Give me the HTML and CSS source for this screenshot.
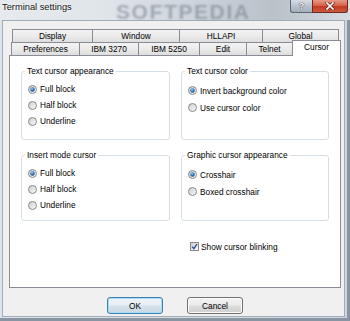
FILE: index.html
```html
<!DOCTYPE html>
<html>
<head>
<meta charset="utf-8">
<title>Terminal settings</title>
<link rel="stylesheet" href="styles.css">
</head>
<body>
<svg class="defs" aria-hidden="true">
  <defs>
    <linearGradient id="rbg" x1="0" y1="0" x2="1" y2="1">
      <stop offset="0" stop-color="#cbcbcb"/>
      <stop offset="1" stop-color="#fdfdfd"/>
    </linearGradient>
    <radialGradient id="dot" cx="0.4" cy="0.35" r="0.7">
      <stop offset="0" stop-color="#a6dbfb"/>
      <stop offset="0.5" stop-color="#2f7bc2"/>
      <stop offset="1" stop-color="#0e3e77"/>
    </radialGradient>
  </defs>
</svg>
<div class="window">
  <div class="titlebar">
    <span class="title">Terminal settings</span>
    <span class="watermark">SOFTPEDIA</span>
    <div class="caption">
      <div class="cbtn help">?</div>
      <div class="cbtn close">
        <svg width="10" height="8" viewBox="0 0 10 8"><path d="M2 1 L8 7 M8 1 L2 7" stroke="#5a2318" stroke-width="3" stroke-linecap="square"/><path d="M2 1 L8 7 M8 1 L2 7" stroke="#ffffff" stroke-width="1.7" stroke-linecap="square"/></svg>
      </div>
    </div>
  </div>
  <div class="client">
    <div class="tabrow row1">
      <div class="tab w-display">Display</div>
      <div class="tab w-window">Window</div>
      <div class="tab w-hllapi">HLLAPI</div>
      <div class="tab w-global last">Global</div>
    </div>
    <div class="tabrow row2">
      <div class="tab w-pref">Preferences</div>
      <div class="tab w-3270">IBM 3270</div>
      <div class="tab w-5250">IBM 5250</div>
      <div class="tab w-edit">Edit</div>
      <div class="tab w-telnet">Telnet</div>
      <div class="tab sel w-cursor">Cursor</div>
    </div>
    <div class="panel">
      <div class="groups">
        <div class="group g-top">
          <div class="gtitle">Text cursor appearance</div>
          <div class="opts left">
            <div class="opt"><svg class="radio" viewBox="0 0 9 9"><circle cx="4.5" cy="4.5" r="4" fill="url(#rbg)" stroke="#8a8a8a"/><circle cx="4.5" cy="4.5" r="2.2" fill="url(#dot)"/></svg><span>Full block</span></div>
            <div class="opt"><svg class="radio" viewBox="0 0 9 9"><circle cx="4.5" cy="4.5" r="4" fill="url(#rbg)" stroke="#8a8a8a"/></svg><span>Half block</span></div>
            <div class="opt"><svg class="radio" viewBox="0 0 9 9"><circle cx="4.5" cy="4.5" r="4" fill="url(#rbg)" stroke="#8a8a8a"/></svg><span>Underline</span></div>
          </div>
        </div>
        <div class="group g-top">
          <div class="gtitle">Text cursor color</div>
          <div class="opts right">
            <div class="opt"><svg class="radio" viewBox="0 0 9 9"><circle cx="4.5" cy="4.5" r="4" fill="url(#rbg)" stroke="#8a8a8a"/><circle cx="4.5" cy="4.5" r="2.2" fill="url(#dot)"/></svg><span>Invert background color</span></div>
            <div class="opt"><svg class="radio" viewBox="0 0 9 9"><circle cx="4.5" cy="4.5" r="4" fill="url(#rbg)" stroke="#8a8a8a"/></svg><span>Use cursor color</span></div>
          </div>
        </div>
        <div class="group g-bottom">
          <div class="gtitle">Insert mode cursor</div>
          <div class="opts left">
            <div class="opt"><svg class="radio" viewBox="0 0 9 9"><circle cx="4.5" cy="4.5" r="4" fill="url(#rbg)" stroke="#8a8a8a"/><circle cx="4.5" cy="4.5" r="2.2" fill="url(#dot)"/></svg><span>Full block</span></div>
            <div class="opt"><svg class="radio" viewBox="0 0 9 9"><circle cx="4.5" cy="4.5" r="4" fill="url(#rbg)" stroke="#8a8a8a"/></svg><span>Half block</span></div>
            <div class="opt"><svg class="radio" viewBox="0 0 9 9"><circle cx="4.5" cy="4.5" r="4" fill="url(#rbg)" stroke="#8a8a8a"/></svg><span>Underline</span></div>
          </div>
        </div>
        <div class="group g-bottom">
          <div class="gtitle">Graphic cursor appearance</div>
          <div class="opts right">
            <div class="opt"><svg class="radio" viewBox="0 0 9 9"><circle cx="4.5" cy="4.5" r="4" fill="url(#rbg)" stroke="#8a8a8a"/><circle cx="4.5" cy="4.5" r="2.2" fill="url(#dot)"/></svg><span>Crosshair</span></div>
            <div class="opt"><svg class="radio" viewBox="0 0 9 9"><circle cx="4.5" cy="4.5" r="4" fill="url(#rbg)" stroke="#8a8a8a"/></svg><span>Boxed crosshair</span></div>
          </div>
        </div>
        <div class="checkrow">
          <svg class="check" viewBox="0 0 9 9"><rect x="0.5" y="0.5" width="8" height="8" fill="url(#rbg)" stroke="#8a8a8a"/><path d="M2.2 4.6 L3.9 6.6 L7 2.2" fill="none" stroke="#2b4c9a" stroke-width="1.4"/></svg>
          <span>Show cursor blinking</span>
        </div>
      </div>
    </div>
    <div class="buttons">
      <div class="btn default">OK</div>
      <div class="btn">Cancel</div>
    </div>
  </div>
</div>
</body>
</html>
```

FILE: styles.css
```css
html, body {
  margin: 0;
  padding: 0;
}
body {
  width: 350px;
  height: 321px;
  overflow: hidden;
  font-family: "Liberation Sans", Arial, sans-serif;
  font-size: 8.3px;
  color: #000;
  background: #d8e0e8;
}
.defs {
  position: absolute;
  width: 0;
  height: 0;
}
.window {
  width: 350px;
  height: 321px;
  box-sizing: border-box;
  background: linear-gradient(90deg, #dce4ec 0%, #d5dde6 60%, #ccd6e0 100%);
  box-shadow: inset -3px -3px 0 #8995a2;
}
.titlebar {
  position: relative;
  height: 20px;
  display: flex;
  justify-content: space-between;
  align-items: flex-start;
  background: linear-gradient(90deg, #e6eaee 0%, #e0e5ea 30%, #cdd4db 55%, #b9c1c9 78%, #c5ccd3 88%, #d7dde3 100%);
}
.title {
  padding: 2px 0 0 2px;
  font-size: 9.3px;
  line-height: 11px;
  color: #111;
  text-shadow: 0 0 3px #fff, 0 0 2px #fff;
  position: relative;
  z-index: 2;
}
.watermark {
  position: absolute;
  left: 116px;
  top: 0;
  font-size: 21px;
  font-weight: bold;
  letter-spacing: 1.6px;
  line-height: 24px;
  color: rgba(105, 116, 130, 0.5);
  filter: blur(1px);
  z-index: 1;
}
.caption {
  display: flex;
  margin-right: 2px;
  position: relative;
  z-index: 2;
}
.cbtn {
  height: 13px;
  box-sizing: border-box;
  border: 1px solid #5d6874;
  border-top: none;
  display: flex;
  align-items: center;
  justify-content: center;
}
.help {
  width: 22px;
  border-right: none;
  border-bottom-left-radius: 3px;
  background: linear-gradient(180deg, #d7dde3 0%, #b9c2cb 50%, #a6b0bb 100%);
  color: #fff;
  font-weight: bold;
  font-size: 9px;
  text-shadow: 0 0 1px #2a3440, 0 0 1px #2a3440;
}
.close {
  width: 36px;
  border-bottom-right-radius: 3px;
  border-color: #6e2a1c;
  background: linear-gradient(180deg, #e79a88 0%, #d6644b 45%, #c53a22 55%, #cc5a40 100%);
}
.client {
  margin: 0 5px 0 2px;
  height: 297px;
  box-sizing: border-box;
  border: 1px solid #a3adb8;
  background: #f0f0f0;
  padding-top: 8px;
}
.tabrow {
  display: flex;
  align-items: flex-end;
  height: 13px;
}
.row1 {
  margin-left: 9px;
}
.row2 {
  margin-left: 8px;
}
.tab {
  height: 13px;
  box-sizing: border-box;
  border-top: 1px solid #898c95;
  border-left: 1px solid #898c95;
  background: linear-gradient(180deg, #f3f3f3 0%, #ebebeb 50%, #dedede 100%);
  text-align: center;
  line-height: 12px;
  white-space: nowrap;
}
.tab.last {
  border-right: 1px solid #898c95;
}
.tab.sel {
  height: 16px;
  margin-top: -3px;
  margin-bottom: -1px;
  border-right: 1px solid #898c95;
  background: #fff;
  position: relative;
  z-index: 1;
  line-height: 13px;
}
.w-display { width: 80px; }
.w-window { width: 87px; }
.w-hllapi { width: 83px; }
.w-global { width: 77px; }
.w-pref { width: 68px; }
.w-3270 { width: 59px; }
.w-5250 { width: 61px; }
.w-edit { width: 47px; }
.w-telnet { width: 46px; }
.w-cursor { width: 49px; }
.panel {
  margin-left: 6px;
  width: 332px;
  height: 233px;
  box-sizing: border-box;
  border: 1px solid #898c95;
  background: #fff;
  padding: 15px 0 0 11px;
}
.groups {
  display: grid;
  grid-template-columns: 149px 148px;
  grid-template-rows: 69px 66px 20px;
  column-gap: 11px;
  row-gap: 15px;
}
.group {
  box-sizing: border-box;
  border: 1px solid #d5dfe5;
  border-radius: 3px;
  display: flex;
  flex-direction: column;
  align-items: flex-start;
}
.gtitle {
  margin: -6px 0 0 3px;
  padding: 0 2px;
  line-height: 11px;
  background: #fff;
  white-space: nowrap;
}
.opts {
  display: flex;
  flex-direction: column;
  padding-left: 6px;
}
.opts.left {
  margin-top: 4px;
}
.opts.right {
  margin-top: 5px;
}
.opt {
  display: flex;
  align-items: center;
  white-space: nowrap;
}
.opts.left .opt {
  height: 16px;
}
.opts.right .opt {
  height: 17px;
}
.radio {
  width: 9px;
  height: 9px;
  margin-right: 3px;
  flex: none;
}
.checkrow {
  grid-column: 2;
  margin-top: 1px;
  padding-left: 9px;
  display: flex;
  align-items: center;
  white-space: nowrap;
}
.check {
  width: 9px;
  height: 9px;
  margin-right: 2px;
  flex: none;
}
.buttons {
  display: flex;
  justify-content: center;
  gap: 24px;
  padding-left: 3px;
  margin-top: 9px;
}
.btn {
  width: 56px;
  height: 17px;
  box-sizing: border-box;
  border: 1px solid #707070;
  border-radius: 3px;
  background: linear-gradient(180deg, #f2f2f2 0%, #ebebeb 48%, #dddddd 52%, #cfcfcf 100%);
  display: flex;
  align-items: center;
  justify-content: center;
  box-shadow: inset 0 0 0 1px #fcfcfc;
}
.btn.default {
  border-color: #3c7fb1;
  box-shadow: inset 0 0 0 1px #a9dcf6;
  background: linear-gradient(180deg, #eef4f8 0%, #e6eef4 48%, #d6e1ea 52%, #cbd8e3 100%);
}
```
